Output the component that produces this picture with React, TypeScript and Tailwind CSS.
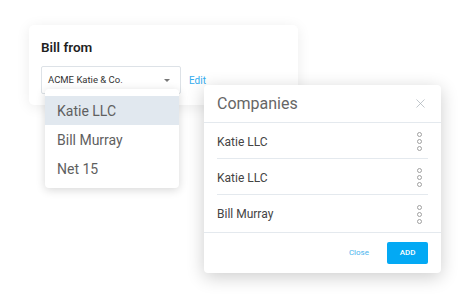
import { X } from "lucide-react";

const menuItems = ["Katie LLC", "Bill Murray", "Net 15"];
const companies = ["Katie LLC", "Katie LLC", "Bill Murray"];

function Kebab() {
  return (
    <span aria-hidden="true" className="flex flex-col items-center gap-[2px]">
      <span className="h-[5px] w-[5px] rounded-full border border-[#a0a0a0]" />
      <span className="h-[5px] w-[5px] rounded-full border border-[#a0a0a0]" />
      <span className="h-[5px] w-[5px] rounded-full border border-[#a0a0a0]" />
    </span>
  );
}

function BillFromCard() {
  return (
    <section className="ml-[29px] h-[80px] w-[269px] rounded-[5px] bg-white px-[12px] pt-[12px] shadow-[0_2px_14px_rgba(0,0,0,0.08)]">
      <h2 className="text-[13.5px] leading-[20px] font-semibold text-[#1f1f1f]">
        Bill from
      </h2>
      <div className="mt-[9px] flex items-center">
        <div className="flex h-[28px] w-[140px] items-center justify-between rounded-[2px] border border-[#dde2e7] pl-[6px] pr-[10px]">
          <span className="text-[9.5px] text-[#333]">ACME Katie &amp; Co.</span>
          <span className="h-0 w-0 border-x-[3px] border-t-[3px] border-x-transparent border-t-[#777]" />
        </div>
        <span className="ml-[8px] text-[10px] text-[#34acef]">Edit</span>
      </div>
    </section>
  );
}

function SelectMenu() {
  return (
    <ul className="absolute left-[45px] top-[89px] w-[134px] rounded-[4px] bg-white pt-[7px] pb-[5px] shadow-[0_2px_10px_rgba(0,0,0,0.16)]">
      {menuItems.map((item, index) => (
        <li
          key={item}
          className={`flex h-[29px] items-center pl-[12px] pt-[1px] text-[14px] text-[#5f5f5f] ${
            index === 0 ? "bg-[#e1e8ef]" : ""
          }`}
        >
          {item}
        </li>
      ))}
    </ul>
  );
}

function CompaniesDialog() {
  return (
    <div className="absolute left-[204px] top-[85px] flex h-[188px] w-[237px] flex-col rounded-[4px] bg-white shadow-[0_4px_18px_rgba(0,0,0,0.2)]">
      <header className="flex h-[38px] items-center justify-between border-b border-[#e4e9ee] pl-[13px] pr-[13px]">
        <h2 className="text-[16px] text-[#666]">Companies</h2>
        <X className="h-[15px] w-[15px] text-[#a5adb5]" strokeWidth={1.1} />
      </header>
      <ul className="px-[13px]">
        {companies.map((name, index) => (
          <li
            key={index}
            className={`flex h-[36px] items-center justify-between pt-[2px] pr-[6px] text-[12px] text-[#444] ${
              index < companies.length - 1 ? "border-b border-[#e4e9ee]" : ""
            }`}
          >
            <span>{name}</span>
            <Kebab />
          </li>
        ))}
      </ul>
      <footer className="mt-auto flex h-[41px] items-center justify-end border-t border-[#e4e9ee] pr-[13px]">
        <span className="text-[8px] text-[#4ab4ee]">Close</span>
        <button className="ml-[18px] h-[22px] w-[41px] rounded-[2px] bg-[#03a9f4] text-[8px] font-medium text-white">
          ADD
        </button>
      </footer>
    </div>
  );
}

export default function App() {
  return (
    <div className="relative h-[305px] w-[470px] overflow-hidden bg-white pt-[25px] font-['Roboto',sans-serif]">
      <BillFromCard />
      <SelectMenu />
      <CompaniesDialog />
    </div>
  );
}
